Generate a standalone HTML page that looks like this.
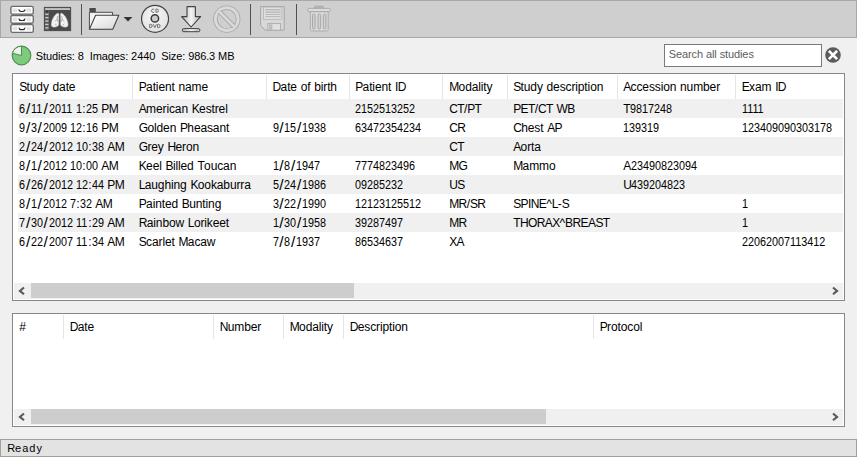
<!DOCTYPE html>
<html><head><meta charset="utf-8"><style>
html,body{margin:0;padding:0;}
body{width:857px;height:457px;overflow:hidden;position:relative;background:#f0f0f0;font-family:"Liberation Sans",sans-serif;}
#tb{position:absolute;left:0;top:0;width:855px;height:36px;background:#cfcfcf;border:1px solid #a8a8a8;}
.tsep{position:absolute;top:4px;width:1px;height:31px;background:#505050;}
.t{position:absolute;font-size:12px;line-height:14px;white-space:nowrap;color:#000;letter-spacing:-0.12px;}
.t i{font-style:normal;}
.t i.d{letter-spacing:0;display:inline-block;transform:scaleX(0.9);transform-origin:0 0;}
.t i.s{font-size:15.5px;line-height:10px;letter-spacing:0.7px;margin-left:0.7px;position:relative;top:1.2px;}
.t i.w{letter-spacing:0.4px;}
.t i.u{letter-spacing:-0.6px;}
.sm{font-size:11px;letter-spacing:-0.1px;}
.sm i.d,.sm i.s,.sm i.w,.sm i.u{letter-spacing:-0.1px;margin-left:0;}
.sm i.d{transform:none;}
.rd{letter-spacing:1px;}
.rd i.w{letter-spacing:1px;}
.ph{color:#5c5c5c;}
#search{position:absolute;left:664px;top:44px;width:156px;height:21px;background:#fff;border:1px solid #7a7a7a;}
.tbl{position:absolute;left:12px;width:831px;background:#fff;border:1px solid #828790;}
.row{position:absolute;left:18px;width:825px;height:19px;background:#f0f0f0;}
.hsep{position:absolute;width:1px;height:24px;background:#e5e5e5;}
.track{position:absolute;left:14px;width:829px;height:16px;background:#f0f0f0;}
.thumb{position:absolute;height:15px;background:#cdcdcd;}
.arr{position:absolute;}
#status{position:absolute;left:0;top:439px;width:855px;height:16px;background:#e3e3e3;border:1px solid #a0a0a0;}

</style></head><body>
<div id="tb"></div><div class="tsep" style="left:81px"></div><div class="tsep" style="left:250px"></div><div class="tsep" style="left:296px"></div><svg style="position:absolute;left:0;top:0" width="340" height="38" viewBox="0 0 340 38">
<defs>
<linearGradient id="gdr" x1="0" x2="1" y1="0" y2="0"><stop offset="0" stop-color="#b0b0b0"/><stop offset="0.5" stop-color="#f4f4f4"/><stop offset="1" stop-color="#b8b8b8"/></linearGradient>
<linearGradient id="gfold" x1="0" x2="1" y1="0" y2="1"><stop offset="0" stop-color="#ffffff"/><stop offset="1" stop-color="#d8d8d8"/></linearGradient>
<radialGradient id="gcd" cx="0.45" cy="0.4" r="0.6"><stop offset="0" stop-color="#f6f6f6"/><stop offset="1" stop-color="#e2e2e2"/></radialGradient>
</defs>
<!-- drawers -->
<g>
 <g id="drw">
  <rect x="10.9" y="6.4" width="22.4" height="7.7" rx="1.6" fill="#ffffff" stroke="#6a6a6a" stroke-width="1.35"/>
  <rect x="12.5" y="8.4" width="4.6" height="3.7" fill="#e2e2e2"/>
  <rect x="26.5" y="8.4" width="4.4" height="3.7" fill="#e2e2e2"/>
  <path d="M18.3 9.3 Q18.6 12 21 12 L22.9 12 Q25.3 12 25.6 9.3 L24.5 9.5 Q24.2 10.9 22.6 10.9 L21.3 10.9 Q19.7 10.9 19.4 9.5 Z" fill="#262626"/>
 </g>
 <use href="#drw" y="9.1"/>
 <use href="#drw" y="18.2"/>
</g>
<!-- lungs -->
<g>
 <rect x="44.2" y="7.2" width="26.6" height="23.6" fill="#4a4a4a" stroke="#3a3a3a" stroke-width="0.6"/>
 <rect x="45" y="8.1" width="25" height="1.9" fill="#c4c4c4"/>
 <rect x="45" y="10.6" width="4" height="19.6" fill="#5e5e5e"/>
 <g fill="#cfcfcf">
  <rect x="45.3" y="13.6" width="3.2" height="1.3"/>
  <rect x="45.3" y="17" width="3.2" height="1.3"/>
  <rect x="45.3" y="20.4" width="3.2" height="1.3"/>
  <rect x="45.3" y="23.8" width="3.2" height="1.3"/>
  <rect x="45.3" y="27.2" width="3.2" height="1.3"/>
 </g>
  <path d="M58.2 13.1 C55.6 13.3 51.6 18.8 51.1 24.2 C50.9 26.8 52.8 27.5 55 27.2 C57.3 26.9 58.7 26 58.9 24.6 L59 15 C59 13.8 58.8 13.1 58.2 13.1 Z" fill="#f2f2f2" stroke="#8a8a8a" stroke-width="0.5"/>
  <path d="M 61.1 13.1 C 63.7 13.3 67.7 18.8 68.2 24.2 C 68.4 26.8 66.5 27.5 64.3 27.2 C 62.0 26.9 60.6 26.0 60.4 24.6 L 60.3 15.0 C 60.3 13.8 60.5 13.1 61.1 13.1 Z" fill="#f2f2f2" stroke="#8a8a8a" stroke-width="0.5"/>
 <path d="M57.6 16 L57.2 19 L55.2 21.5 M57.2 19 L58.2 22 M61.7 16 L62.1 19 L64.1 21.5 M62.1 19 L61.1 22 M55 24 L56.5 25 M64.3 24 L62.8 25" stroke="#a0a0a0" stroke-width="0.8" fill="none"/>
 <circle cx="47" cy="11.8" r="0.9" fill="#222"/>
</g>
<!-- folder -->
<g>
 <path d="M89.4 8.6 Q89.4 8.1 89.9 8.1 L95.3 8.1 Q95.8 8.1 95.8 8.6 L95.8 12 L89.4 12 Z" fill="#4a4a4a"/>
 <path d="M89.4 12.3 L112.6 12.3 L112.6 28.8 L89.4 28.8 Z" fill="#f2f2f2" stroke="#4a4a4a" stroke-width="1"/>
 <path d="M95.6 15.2 L118.8 15.2 L112.8 29.3 L89.4 29.3 Z" fill="url(#gfold)" stroke="#404040" stroke-width="1.05" stroke-linejoin="round"/>
 <path d="M123.6 17 L132.4 17 L128 21.6 Z" fill="#333"/>
</g>
<!-- cd -->
<g>
 <circle cx="155.05" cy="18.8" r="13.5" fill="url(#gcd)" stroke="#454545" stroke-width="1.2"/>
 <circle cx="154.9" cy="18.4" r="3.7" fill="#cacaca" stroke="#3a3a3a" stroke-width="1.5"/>
  <g fill="none" stroke="#6c6c6c" stroke-width="0.95">
  <path d="M154.3 9.6 A1.65 1.65 0 1 0 154.3 11.9"/>
  <path d="M155.9 9.1 L155.9 12.3 L156.9 12.3 A1.55 1.6 0 0 0 156.9 9.1 Z"/>
  <path d="M149.7 24.3 L149.7 27.6 L150.6 27.6 A1.6 1.65 0 0 0 150.6 24.3 Z"/>
  <path d="M153.2 24.2 L154.8 27.7 L156.4 24.2"/>
  <path d="M157.6 24.3 L157.6 27.6 L158.5 27.6 A1.6 1.65 0 0 0 158.5 24.3 Z"/>
 </g>
</g>
<!-- download -->
<g>
 <path d="M187 7.1 Q187 6.6 187.5 6.6 L194.9 6.6 Q195.4 6.6 195.4 7.1 L195.4 16.6 L200.6 16.6 L191.1 27 L181.6 16.6 L187 16.6 Z" fill="url(#gdr)" stroke="#404040" stroke-width="1.1" stroke-linejoin="round"/>
 <rect x="182.3" y="28.6" width="17.6" height="3.1" rx="1.4" fill="url(#gdr)" stroke="#404040" stroke-width="1"/>
</g>
<!-- no sign -->
<g fill="none">
 <circle cx="226.75" cy="19.1" r="11.4" stroke="#aaaaaa" stroke-width="4.6"/>
 <circle cx="226.75" cy="19.1" r="11.4" stroke="#dadada" stroke-width="2.8"/>
 <path d="M219.3 11.6 L234.2 26.6" stroke="#aaaaaa" stroke-width="4.4"/>
 <path d="M219.0 11.3 L234.5 26.9" stroke="#dadada" stroke-width="2.6"/>
</g>
<!-- save -->
<g>
 <path d="M260.6 6.6 L284.2 6.6 L284.2 30.2 L265.2 30.2 L260.6 25.5 Z" fill="#d8d8d8" stroke="#a6a6a6" stroke-width="1"/>
 <rect x="263.6" y="7.1" width="18.2" height="12.2" fill="#e0e0e0" stroke="#b4b4b4" stroke-width="0.8"/>
 <rect x="265.3" y="9.6" width="15.2" height="2.8" fill="#d2d2d2"/><path d="M265.3 9.6 L280.5 9.6 M265.3 12.4 L280.5 12.4 M265.3 14.5 L280.5 14.5 M265.3 16.6 L280.5 16.6" stroke="#b2b2b2" stroke-width="0.9"/>
 <rect x="267.8" y="23.6" width="12.8" height="6.6" fill="#e0e0e0" stroke="#aaaaaa" stroke-width="0.9"/>
 <rect x="269" y="24.2" width="3.4" height="5.8" fill="#bdbdbd"/>
</g>
<!-- trash -->
<g>
 <path d="M313.6 8.6 L315 6.2 L322.8 6.2 L324.2 8.6 Z" fill="#b4b4b4" stroke="#a8a8a8" stroke-width="0.8"/>
 <rect x="307.5" y="8.4" width="23" height="3.2" rx="1.6" fill="#dcdcdc" stroke="#a8a8a8" stroke-width="0.9"/>
 <path d="M310.4 11.7 L328.2 11.7 L328.2 29.4 Q328.2 31 326.6 31 L312 31 Q310.4 31 310.4 29.4 Z" fill="#d9d9d9" stroke="#a8a8a8" stroke-width="0.9"/>
 <rect x="312.5" y="14" width="2.6" height="15" rx="1.3" fill="#d0d0d0" stroke="#a4a4a4" stroke-width="0.9"/>
 <rect x="318" y="14" width="2.6" height="15" rx="1.3" fill="#d0d0d0" stroke="#a4a4a4" stroke-width="0.9"/>
 <rect x="323.3" y="14" width="2.6" height="15" rx="1.3" fill="#d0d0d0" stroke="#a4a4a4" stroke-width="0.9"/>
</g>
</svg>
<svg style="position:absolute;left:11px;top:45px" width="22" height="22" viewBox="0 0 22 22">
<circle cx="10.5" cy="10.5" r="9.3" fill="#7dcb7d" stroke="#4f8f4f" stroke-width="1.2"/>
<path d="M10.5 10.5 L10.5 1.2 A9.3 9.3 0 0 0 1.5 8.3 Z" fill="#f0f0f0" stroke="#4f8f4f" stroke-width="1"/>
</svg><div class="t sm" style="left:35.800000000000004px;top:49px"><i class=u>S</i>tudies:<i class=w> </i><i class=d style="width:6.00px">8</i></div>
<div class="t sm" style="left:89.7px;top:49px"><i class=u>I</i>mages:<i class=w> </i><i class=d style="width:24.00px">2440</i></div>
<div class="t sm" style="left:161.2px;top:49px"><i class=u>S</i>ize:<i class=w> </i><i class=d style="width:18.00px">986</i>.<i class=d style="width:6.00px">3</i><i class=w> </i><i class=u>MB</i></div>
<div id="search"></div><div class="t sm ph" style="left:668.7px;top:47px"><i class=u>S</i>earch<i class=w> </i>all<i class=w> </i>studies</div>
<svg style="position:absolute;left:824px;top:46px" width="18" height="18" viewBox="0 0 18 18">
<circle cx="9" cy="9" r="7.8" fill="#5c5c5c"/>
<path d="M4.9 4.9 L13.1 13.1 M13.1 4.9 L4.9 13.1" stroke="#fff" stroke-width="2.7" stroke-linecap="butt"/>
</svg><div class="tbl" style="top:73px;height:226px"></div><div class="row" style="top:99px"></div><div class="row" style="top:137px"></div><div class="row" style="top:175px"></div><div class="row" style="top:213px"></div><div class="hsep" style="left:132px;top:75px"></div><div class="hsep" style="left:266px;top:75px"></div><div class="hsep" style="left:349px;top:75px"></div><div class="hsep" style="left:442px;top:75px"></div><div class="hsep" style="left:507px;top:75px"></div><div class="hsep" style="left:617px;top:75px"></div><div class="hsep" style="left:735px;top:75px"></div><div class="t" style="left:19.2px;top:80px"><i class=u>S</i>tudy<i class=w> </i>date</div>
<div class="t" style="left:138.7px;top:80px"><i class=u>P</i>atient<i class=w> </i>name</div>
<div class="t" style="left:272.5px;top:80px"><i class=u>D</i>ate<i class=w> </i>of<i class=w> </i>birth</div>
<div class="t" style="left:355.2px;top:80px"><i class=u>P</i>atient<i class=w> </i><i class=u>ID</i></div>
<div class="t" style="left:449.2px;top:80px"><i class=u>M</i>odality</div>
<div class="t" style="left:513.2px;top:80px"><i class=u>S</i>tudy<i class=w> </i>description</div>
<div class="t" style="left:623.2px;top:80px"><i class=u>A</i>ccession<i class=w> </i>number</div>
<div class="t" style="left:741.7px;top:80px"><i class=u>E</i>xam<i class=w> </i><i class=u>ID</i></div>
<div class="t" style="left:19.2px;top:102px"><i class=d style="width:6.00px">6</i><i class=s>/</i><i class=d style="width:12.00px">11</i><i class=s>/</i><i class=d style="width:24.00px">2011</i><i class=w> </i><i class=d style="width:6.00px">1</i>:<i class=d style="width:12.00px">25</i><i class=w> </i><i class=u>PM</i></div>
<div class="t" style="left:138.7px;top:102px"><i class=u>A</i>merican<i class=w> </i><i class=u>K</i>estrel</div>
<div class="t" style="left:355.2px;top:102px"><i class=d style="width:60.00px">2152513252</i></div>
<div class="t" style="left:449.2px;top:102px"><i class=u>CT</i>/<i class=u>PT</i></div>
<div class="t" style="left:513.2px;top:102px"><i class=u>PET</i>/<i class=u>CT</i><i class=w> </i><i class=u>WB</i></div>
<div class="t" style="left:623.2px;top:102px"><i class=u>T</i><i class=d style="width:42.00px">9817248</i></div>
<div class="t" style="left:741.7px;top:102px"><i class=d style="width:24.00px">1111</i></div>
<div class="t" style="left:19.2px;top:121px"><i class=d style="width:6.00px">9</i><i class=s>/</i><i class=d style="width:6.00px">3</i><i class=s>/</i><i class=d style="width:24.00px">2009</i><i class=w> </i><i class=d style="width:12.00px">12</i>:<i class=d style="width:12.00px">16</i><i class=w> </i><i class=u>PM</i></div>
<div class="t" style="left:138.7px;top:121px"><i class=u>G</i>olden<i class=w> </i><i class=u>P</i>heasant</div>
<div class="t" style="left:272.5px;top:121px"><i class=d style="width:6.00px">9</i><i class=s>/</i><i class=d style="width:12.00px">15</i><i class=s>/</i><i class=d style="width:24.00px">1938</i></div>
<div class="t" style="left:355.2px;top:121px"><i class=d style="width:66.00px">63472354234</i></div>
<div class="t" style="left:449.2px;top:121px"><i class=u>CR</i></div>
<div class="t" style="left:513.2px;top:121px"><i class=u>C</i>hest<i class=w> </i><i class=u>AP</i></div>
<div class="t" style="left:623.2px;top:121px"><i class=d style="width:36.00px">139319</i></div>
<div class="t" style="left:741.7px;top:121px"><i class=d style="width:90.00px">123409090303178</i></div>
<div class="t" style="left:19.2px;top:140px"><i class=d style="width:6.00px">2</i><i class=s>/</i><i class=d style="width:12.00px">24</i><i class=s>/</i><i class=d style="width:24.00px">2012</i><i class=w> </i><i class=d style="width:12.00px">10</i>:<i class=d style="width:12.00px">38</i><i class=w> </i><i class=u>AM</i></div>
<div class="t" style="left:138.7px;top:140px"><i class=u>G</i>rey<i class=w> </i><i class=u>H</i>eron</div>
<div class="t" style="left:449.2px;top:140px"><i class=u>CT</i></div>
<div class="t" style="left:513.2px;top:140px"><i class=u>A</i>orta</div>
<div class="t" style="left:19.2px;top:159px"><i class=d style="width:6.00px">8</i><i class=s>/</i><i class=d style="width:6.00px">1</i><i class=s>/</i><i class=d style="width:24.00px">2012</i><i class=w> </i><i class=d style="width:12.00px">10</i>:<i class=d style="width:12.00px">00</i><i class=w> </i><i class=u>AM</i></div>
<div class="t" style="left:138.7px;top:159px"><i class=u>K</i>eel<i class=w> </i><i class=u>B</i>illed<i class=w> </i><i class=u>T</i>oucan</div>
<div class="t" style="left:272.5px;top:159px"><i class=d style="width:6.00px">1</i><i class=s>/</i><i class=d style="width:6.00px">8</i><i class=s>/</i><i class=d style="width:24.00px">1947</i></div>
<div class="t" style="left:355.2px;top:159px"><i class=d style="width:60.00px">7774823496</i></div>
<div class="t" style="left:449.2px;top:159px"><i class=u>MG</i></div>
<div class="t" style="left:513.2px;top:159px"><i class=u>M</i>ammo</div>
<div class="t" style="left:623.2px;top:159px"><i class=u>A</i><i class=d style="width:66.00px">23490823094</i></div>
<div class="t" style="left:19.2px;top:178px"><i class=d style="width:6.00px">6</i><i class=s>/</i><i class=d style="width:12.00px">26</i><i class=s>/</i><i class=d style="width:24.00px">2012</i><i class=w> </i><i class=d style="width:12.00px">12</i>:<i class=d style="width:12.00px">44</i><i class=w> </i><i class=u>PM</i></div>
<div class="t" style="left:138.7px;top:178px"><i class=u>L</i>aughing<i class=w> </i><i class=u>K</i>ookaburra</div>
<div class="t" style="left:272.5px;top:178px"><i class=d style="width:6.00px">5</i><i class=s>/</i><i class=d style="width:12.00px">24</i><i class=s>/</i><i class=d style="width:24.00px">1986</i></div>
<div class="t" style="left:355.2px;top:178px"><i class=d style="width:48.00px">09285232</i></div>
<div class="t" style="left:449.2px;top:178px"><i class=u>US</i></div>
<div class="t" style="left:623.2px;top:178px"><i class=u>U</i><i class=d style="width:54.00px">439204823</i></div>
<div class="t" style="left:19.2px;top:197px"><i class=d style="width:6.00px">8</i><i class=s>/</i><i class=d style="width:6.00px">1</i><i class=s>/</i><i class=d style="width:24.00px">2012</i><i class=w> </i><i class=d style="width:6.00px">7</i>:<i class=d style="width:12.00px">32</i><i class=w> </i><i class=u>AM</i></div>
<div class="t" style="left:138.7px;top:197px"><i class=u>P</i>ainted<i class=w> </i><i class=u>B</i>unting</div>
<div class="t" style="left:272.5px;top:197px"><i class=d style="width:6.00px">3</i><i class=s>/</i><i class=d style="width:12.00px">22</i><i class=s>/</i><i class=d style="width:24.00px">1990</i></div>
<div class="t" style="left:355.2px;top:197px"><i class=d style="width:66.00px">12123125512</i></div>
<div class="t" style="left:449.2px;top:197px"><i class=u>MR</i>/<i class=u>SR</i></div>
<div class="t" style="left:513.2px;top:197px"><i class=u>SPINE</i>^<i class=u>L</i>-<i class=u>S</i></div>
<div class="t" style="left:741.7px;top:197px"><i class=d style="width:6.00px">1</i></div>
<div class="t" style="left:19.2px;top:216px"><i class=d style="width:6.00px">7</i><i class=s>/</i><i class=d style="width:12.00px">30</i><i class=s>/</i><i class=d style="width:24.00px">2012</i><i class=w> </i><i class=d style="width:12.00px">11</i>:<i class=d style="width:12.00px">29</i><i class=w> </i><i class=u>AM</i></div>
<div class="t" style="left:138.7px;top:216px"><i class=u>R</i>ainbow<i class=w> </i><i class=u>L</i>orikeet</div>
<div class="t" style="left:272.5px;top:216px"><i class=d style="width:6.00px">1</i><i class=s>/</i><i class=d style="width:12.00px">30</i><i class=s>/</i><i class=d style="width:24.00px">1958</i></div>
<div class="t" style="left:355.2px;top:216px"><i class=d style="width:48.00px">39287497</i></div>
<div class="t" style="left:449.2px;top:216px"><i class=u>MR</i></div>
<div class="t" style="left:513.2px;top:216px"><i class=u>THORAX</i>^<i class=u>BREAST</i></div>
<div class="t" style="left:741.7px;top:216px"><i class=d style="width:6.00px">1</i></div>
<div class="t" style="left:19.2px;top:235px"><i class=d style="width:6.00px">6</i><i class=s>/</i><i class=d style="width:12.00px">22</i><i class=s>/</i><i class=d style="width:24.00px">2007</i><i class=w> </i><i class=d style="width:12.00px">11</i>:<i class=d style="width:12.00px">34</i><i class=w> </i><i class=u>AM</i></div>
<div class="t" style="left:138.7px;top:235px"><i class=u>S</i>carlet<i class=w> </i><i class=u>M</i>acaw</div>
<div class="t" style="left:272.5px;top:235px"><i class=d style="width:6.00px">7</i><i class=s>/</i><i class=d style="width:6.00px">8</i><i class=s>/</i><i class=d style="width:24.00px">1937</i></div>
<div class="t" style="left:355.2px;top:235px"><i class=d style="width:48.00px">86534637</i></div>
<div class="t" style="left:449.2px;top:235px"><i class=u>XA</i></div>
<div class="t" style="left:741.7px;top:235px"><i class=d style="width:84.00px">22062007113412</i></div>
<div class="track" style="top:283px"></div><div class="thumb" style="top:283px;left:31px;width:323px"></div><svg class="arr" style="left:17px;top:284px" width="10" height="14" viewBox="0 0 10 14"><path d="M7.0 3.5 L2.9 6.9 L7.0 10.3" fill="none" stroke="#5a5a5a" stroke-width="2.1"/></svg><svg class="arr" style="left:830px;top:284px" width="10" height="14" viewBox="0 0 10 14"><path d="M3.0 3.5 L7.1 6.9 L3.0 10.3" fill="none" stroke="#5a5a5a" stroke-width="2.1"/></svg><div class="tbl" style="top:313px;height:112px"></div><div class="hsep" style="left:63px;top:315px"></div><div class="hsep" style="left:213px;top:315px"></div><div class="hsep" style="left:283px;top:315px"></div><div class="hsep" style="left:343px;top:315px"></div><div class="hsep" style="left:593px;top:315px"></div><div class="t" style="left:19.2px;top:320px">#</div>
<div class="t" style="left:69.7px;top:320px"><i class=u>D</i>ate</div>
<div class="t" style="left:219.7px;top:320px"><i class=u>N</i>umber</div>
<div class="t" style="left:289.7px;top:320px"><i class=u>M</i>odality</div>
<div class="t" style="left:349.7px;top:320px"><i class=u>D</i>escription</div>
<div class="t" style="left:599.7px;top:320px"><i class=u>P</i>rotocol</div>
<div class="track" style="top:409px"></div><div class="thumb" style="top:409px;left:31px;width:515px"></div><svg class="arr" style="left:17px;top:410px" width="10" height="14" viewBox="0 0 10 14"><path d="M7.0 3.5 L2.9 6.9 L7.0 10.3" fill="none" stroke="#5a5a5a" stroke-width="2.1"/></svg><svg class="arr" style="left:830px;top:410px" width="10" height="14" viewBox="0 0 10 14"><path d="M3.0 3.5 L7.1 6.9 L3.0 10.3" fill="none" stroke="#5a5a5a" stroke-width="2.1"/></svg><div id="status"></div><div class="t sm rd" style="left:7.2px;top:440.5px"><i class=u>R</i>eady</div>

</body></html>
